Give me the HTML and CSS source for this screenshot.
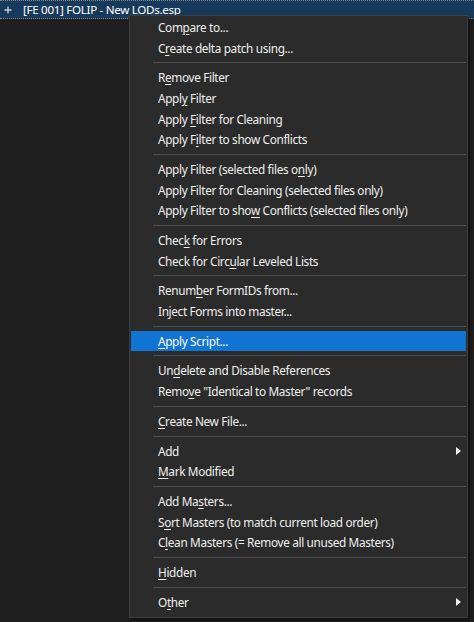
FILE: index.html
```html
<!DOCTYPE html>
<html>
<head>
<meta charset="utf-8">
<link rel="stylesheet" href="styles.css">
</head>
<body>
<div class="tree">
  <div class="node">
    <svg class="plus" width="10" height="10" viewBox="0 0 10 10"><path d="M5 1.5V8.5M1.5 5H8.5" stroke="#d0d0d0" stroke-width="1.3"/></svg>
    <span class="label">[FE 001] FOLIP - New LODs.esp</span>
  </div>
</div>
<div class="menu">
  <div class="item">Com<u>p</u>are to...</div>
  <div class="item">C<u>r</u>eate delta patch using...</div>
  <div class="sep"></div>
  <div class="item">R<u>e</u>move Filter</div>
  <div class="item">Appl<u>y</u> Filter</div>
  <div class="item">Apply <u>F</u>ilter for Cleaning</div>
  <div class="item">Apply F<u>i</u>lter to show Conflicts</div>
  <div class="sep"></div>
  <div class="item">Apply Filter (selected files o<u>n</u>ly)</div>
  <div class="item">Apply Filter for Cleaning (selected files only)</div>
  <div class="item">Apply Filter to sho<u>w</u> Conflicts (selected files only)</div>
  <div class="sep"></div>
  <div class="item">Chec<u>k</u> for Errors</div>
  <div class="item">Check for Circ<u>u</u>lar Leveled Lists</div>
  <div class="sep"></div>
  <div class="item">Renum<u>b</u>er FormIDs from...</div>
  <div class="item">In<u>j</u>ect Forms into master...</div>
  <div class="sep"></div>
  <div class="item active"><u>A</u>pply Script...</div>
  <div class="sep"></div>
  <div class="item">Un<u>d</u>elete and Disable References</div>
  <div class="item">Remo<u>v</u>e "Identical to Master" records</div>
  <div class="sep"></div>
  <div class="item"><u>C</u>reate New File...</div>
  <div class="sep"></div>
  <div class="item sub">Add<span class="arrow"></span></div>
  <div class="item"><u>M</u>ark Modified</div>
  <div class="sep"></div>
  <div class="item">Add Ma<u>s</u>ters...</div>
  <div class="item">S<u>o</u>rt Masters (to match current load order)</div>
  <div class="item">C<u>l</u>ean Masters (= Remove all unused Masters)</div>
  <div class="sep"></div>
  <div class="item"><u>H</u>idden</div>
  <div class="sep"></div>
  <div class="item sub">O<u>t</u>her<span class="arrow"></span></div>
</div>
</body>
</html>
```
FILE: styles.css
```css
html, body {
  margin: 0;
  padding: 0;
  background: #1e1e1e;
  width: 474px;
  height: 622px;
  overflow: hidden;
  font-family: "Noto Sans", "Open Sans", sans-serif;
}
.tree {
  position: relative;
}
.node {
  display: flex;
  align-items: center;
  height: 17px;
  background: #173a5c;
  border-top: 1px dotted #8a8a8a;
  border-bottom: 1px dotted #8a8a8a;
  color: #ffffff;
  font-size: 11.6px;
  letter-spacing: -0.3px;
}
.plus {
  margin-left: 3px;
  margin-right: 10px;
}
.label {
  line-height: 17px;
}
.menu {
  position: absolute;
  left: 129px;
  top: 15px;
  width: 337px;
  height: 597px;
  padding: 1px 0 3px 0;
  background: #2b2b2b;
  border: 1px solid #3e3e3e;
  box-shadow: 2px 2px 3px rgba(0,0,0,0.5);
  color: #efefef;
  font-size: 11.8px;
  letter-spacing: -0.35px;
}
.item {
  position: relative;
  height: 20.6px;
  line-height: 20.6px;
  padding-left: 27px;
  margin: 0 1px;
  white-space: nowrap;
}
.item u {
  text-decoration-thickness: 1px;
  text-underline-offset: 2px;
}
.item.active {
  background: #0f74d2;
  color: #ffffff;
}
.sep {
  height: 9.2px;
  display: flex;
  align-items: center;
  padding-left: 23px;
  padding-right: 1px;
}
.sep::after {
  content: "";
  flex: 1;
  height: 1px;
  background: #505050;
}
.arrow {
  position: absolute;
  right: 5px;
  top: 6px;
  width: 0;
  height: 0;
  border-top: 4px solid transparent;
  border-bottom: 4px solid transparent;
  border-left: 5px solid #f0f0f0;
}
```
